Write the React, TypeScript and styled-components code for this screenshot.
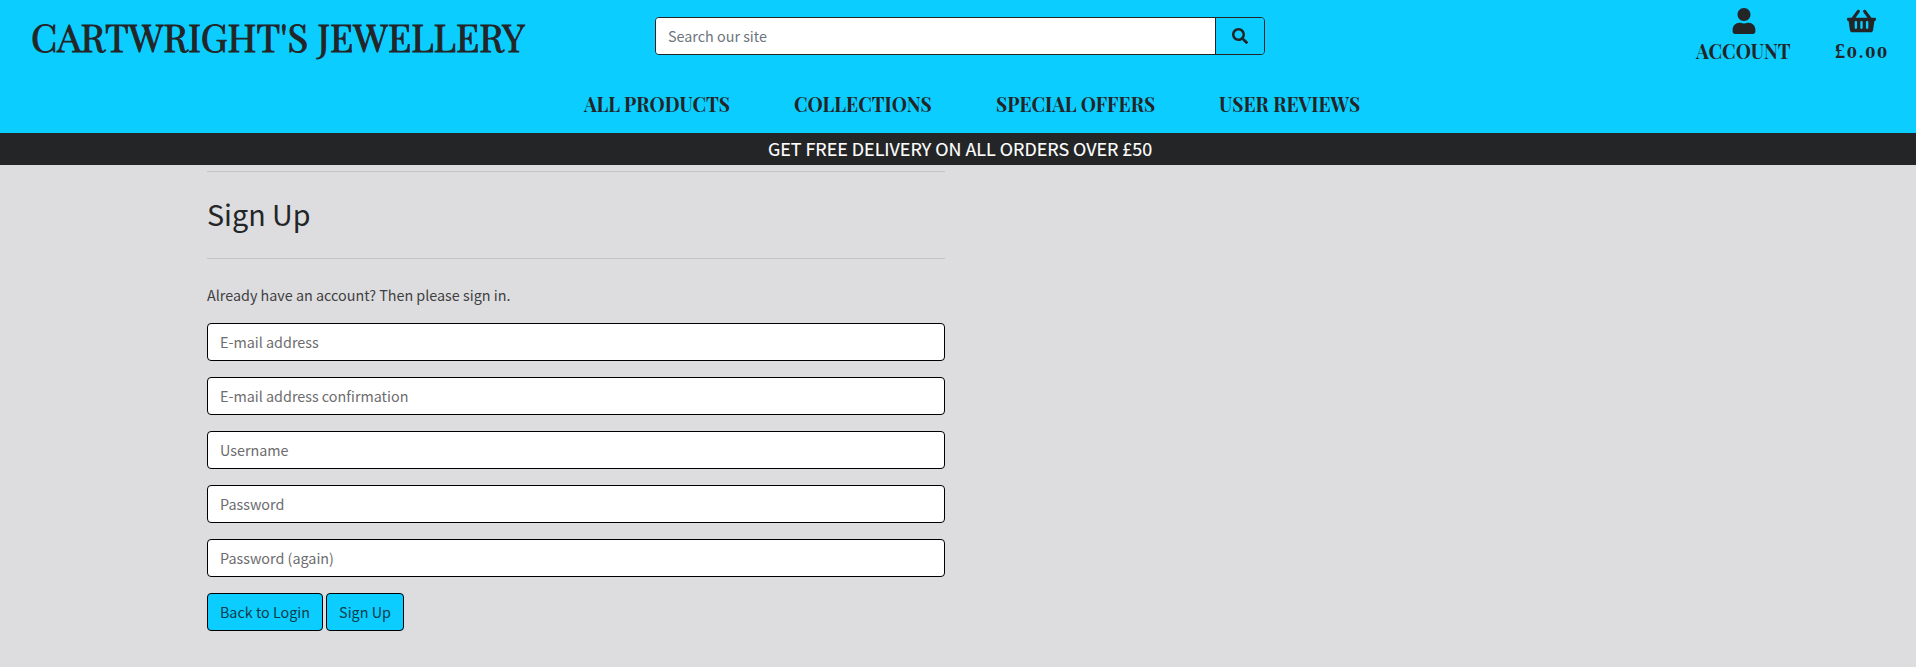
import React from "react";
import styled, { createGlobalStyle } from "styled-components";
import { FaSearch, FaShoppingBasket, FaUser } from "react-icons/fa";

const cyan = "#0bcdff";
const ink = "#232527";
const serif = `"Playfair Display", "Liberation Serif", serif`;
const sans = `"Source Sans Pro", "Noto Sans CJK SC", sans-serif`;

const GlobalStyle = createGlobalStyle`
  * { box-sizing: border-box; }
  body { margin: 0; background: #dddddf; color: ${ink}; font-family: ${sans}; font-size: 14.35px; line-height: 24px; }
  input, button { font: inherit; color: inherit; }
`;

const Page = styled.div`
  min-height: 667px;
`;

const Header = styled.header`
  height: 133px;
  background: ${cyan};
`;

const TopRow = styled.div`
  display: grid;
  grid-template-columns: 655px 610px 1fr;
  height: 72px;
`;

const Brand = styled.h1`
  margin: 0;
  padding: 12px 0 0 31px;
  font: 400 38.4px/48px ${serif};
  white-space: nowrap;
`;

const Scaled = styled.span<{ $scale: number; $stroke?: number }>`
  display: inline-block;
  transform: scaleX(${(p) => p.$scale});
  transform-origin: left center;
  white-space: nowrap;
  -webkit-text-stroke: ${(p) => p.$stroke ?? 0}px ${ink};
`;

const SearchForm = styled.form`
  display: flex;
  height: 38px;
  margin-top: 17px;
  border: 1px solid ${ink};
  border-radius: 4px;
  overflow: hidden;
`;

const SearchInput = styled.input`
  flex: 1;
  min-width: 0;
  padding: 0 12px;
  border: 0;
  background: #fff;
  outline: 0;
  &::placeholder { color: #6c757d; opacity: 1; }
`;

const SearchButton = styled.button`
  display: flex;
  align-items: center;
  justify-content: center;
  width: 49px;
  padding: 0;
  border: 0;
  border-left: 1px solid ${ink};
  background: ${cyan};
`;

const Links = styled.div`
  display: flex;
  justify-content: flex-end;
  gap: 44px;
  padding: 8px 28px 0 0;
`;

const IconLink = styled.a<{ $width: number }>`
  display: flex;
  flex-direction: column;
  align-items: center;
  width: ${(p) => p.$width}px;
  color: ${ink};
  font: 700 19.7px/26px ${serif};
`;

const IconLabel = styled.div`
  width: 100%;
  height: 26px;
  margin-top: 4px;
`;

const Price = styled.div`
  width: 100%;
  height: 26px;
  margin-top: 4px;
  font-family: "DejaVu Serif", serif;
  font-size: 14.6px;
  letter-spacing: 1.6px;
  white-space: nowrap;
  &::first-letter { font-family: "Liberation Serif", serif; font-size: 20.3px; }
`;

const Nav = styled.nav`
  display: flex;
  gap: 65px;
  padding: 19px 0 0 583.5px;
`;

const NavLink = styled.a<{ $width: number }>`
  width: ${(p) => p.$width}px;
  color: ${ink};
  font: 700 19.7px/26px ${serif};
`;

const Banner = styled.div`
  height: 32px;
  padding-left: 4px;
  background: ${ink};
  color: #fff;
  font-size: 17.9px;
  line-height: 30px;
  text-align: center;
  -webkit-text-stroke: 0.15px #fff;
`;

const Content = styled.main`
  width: 738px;
  margin-left: 207px;
  padding-top: 6px;
`;

const Rule = styled.hr`
  margin: 0;
  border: 0;
  border-top: 1px solid #c4c4c6;
`;

const Title = styled.h2`
  height: 86px;
  margin: 0;
  padding-top: 23px;
  font-size: 28.7px;
  font-weight: 400;
  line-height: 38px;
`;

const Intro = styled.p`
  margin: 24px 0 16px;
  color: #3f4042;
`;

const Field = styled.input`
  display: block;
  width: 100%;
  height: 38px;
  margin-bottom: 16px;
  padding: 0 12px 2px;
  border: 1px solid #000;
  border-radius: 4px;
  background: #fff;
  outline: 0;
  &::placeholder { color: #6c6c6e; opacity: 1; }
`;

const Actions = styled.div`
  display: flex;
  gap: 3px;
`;

const Button = styled.button<{ $width: number }>`
  width: ${(p) => p.$width}px;
  height: 38px;
  padding: 0;
  border: 1px solid #000;
  border-radius: 4px;
  background: ${cyan};
  color: #0b3b49;
  white-space: nowrap;
`;

const navItems = [
  { label: "ALL PRODUCTS", width: 145 },
  { label: "COLLECTIONS", width: 137 },
  { label: "SPECIAL OFFERS", width: 158 },
  { label: "USER REVIEWS", width: 141 },
];

const fields = ["E-mail address", "E-mail address confirmation", "Username", "Password", "Password (again)"];

export default function App() {
  return (
    <Page>
      <GlobalStyle />
      <Header>
        <TopRow>
          <Brand>
            <Scaled $scale={0.995} $stroke={1}>CARTWRIGHT'S JEWELLERY</Scaled>
          </Brand>
          <SearchForm>
            <SearchInput placeholder="Search our site" />
            <SearchButton type="button" aria-label="Search">
              <FaSearch size={16} />
            </SearchButton>
          </SearchForm>
          <Links>
            <IconLink $width={95}>
              <FaUser size={26} />
              <IconLabel>
                <Scaled $scale={0.974}>ACCOUNT</Scaled>
              </IconLabel>
            </IconLink>
            <IconLink $width={53}>
              <FaShoppingBasket size={26} style={{ width: 29 }} />
              <Price>£0.00</Price>
            </IconLink>
          </Links>
        </TopRow>
        <Nav>
          {navItems.map((item) => (
            <NavLink key={item.label} $width={item.width}>
              <Scaled $scale={0.975}>{item.label}</Scaled>
            </NavLink>
          ))}
        </Nav>
      </Header>
      <Banner>GET FREE DELIVERY ON ALL ORDERS OVER £50</Banner>
      <Content>
        <Rule />
        <Title>Sign Up</Title>
        <Rule />
        <Intro>Already have an account? Then please sign in.</Intro>
        {fields.map((label) => (
          <Field key={label} placeholder={label} />
        ))}
        <Actions>
          <Button type="button" $width={116}>Back to Login</Button>
          <Button type="button" $width={78}>Sign Up</Button>
        </Actions>
      </Content>
    </Page>
  );
}
